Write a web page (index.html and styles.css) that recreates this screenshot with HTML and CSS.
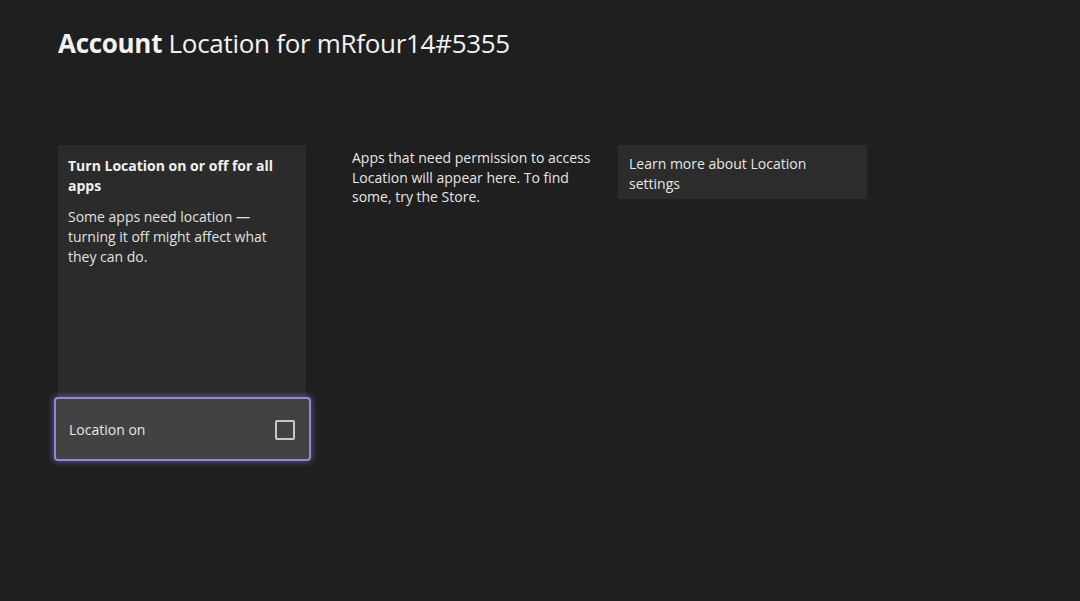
FILE: index.html
```html
<!DOCTYPE html>
<html lang="en">
<head>
<meta charset="utf-8">
<title>Account Location</title>
<link rel="stylesheet" href="styles.css">
</head>
<body>
<div class="page">
  <h1 class="title"><span class="title-strong">Account</span> Location for mRfour14#5355</h1>
  <div class="columns">
    <section class="card">
      <div class="card-body">
        <h2 class="card-heading">Turn Location on or off for all apps</h2>
        <p class="card-text">Some apps need location — turning it off might affect what they can do.</p>
      </div>
      <button class="toggle" type="button">
        <span class="toggle-label">Location on</span>
        <span class="checkbox"></span>
      </button>
    </section>
    <p class="apps-text">Apps that need permission to access Location will appear here. To find some, try the Store.</p>
    <button class="learn" type="button">Learn more about Location settings</button>
  </div>
</div>
</body>
</html>
```
FILE: styles.css
```css
* { box-sizing: border-box; }
html, body { margin: 0; padding: 0; }
body {
  background: #1f1f1f;
  color: #e6e6e6;
  font-family: "Open Sans", "Noto Sans", sans-serif;
  width: 1080px;
  height: 601px;
  overflow: hidden;
}
.page {
  padding: 24px 0 0 58px;
}
.title {
  margin: 0;
  font-size: 26px;
  font-weight: 400;
  line-height: 38px;
  color: #f2f2f2;
  letter-spacing: -0.3px;
}
.title-strong { font-weight: 700; }
.columns {
  display: flex;
  align-items: flex-start;
  margin-top: 83px;
}
.card {
  width: 248px;
  background: #2b2b2b;
  display: flex;
  flex-direction: column;
}
.card-body {
  height: 252px;
  padding: 11px 10px 0 10px;
}
.card-heading {
  margin: 0;
  font-size: 14px;
  font-weight: 700;
  line-height: 20px;
  color: #f0f0f0;
}
.card-text {
  margin: 11px 0 0;
  font-size: 14px;
  line-height: 20px;
  color: #e0e0e0;
}
.toggle {
  margin: 0 -5px 0 -4px;
  height: 64px;
  background: #424242;
  border: 2px solid #9585d8;
  border-radius: 4px;
  box-shadow: 0 0 6px 1px rgba(140, 120, 220, 0.55);
  display: flex;
  align-items: center;
  justify-content: space-between;
  padding: 0 14px 0 13px;
  font-family: inherit;
  color: #e6e6e6;
}
.toggle-label {
  font-size: 14px;
}
.checkbox {
  width: 20px;
  height: 20px;
  margin-top: 2px;
  border: 2px solid #c8c8c8;
  border-radius: 2px;
}
.apps-text {
  width: 250px;
  margin: 3px 0 0 46px;
  font-size: 14px;
  line-height: 19.5px;
  color: #e6e6e6;
}
.learn {
  margin-left: 16px;
  width: 249px;
  height: 54px;
  background: #2c2c2c;
  border: none;
  text-align: left;
  padding: 9px 11px 7px;
  font-family: inherit;
  font-size: 14px;
  line-height: 20px;
  color: #e6e6e6;
}
```
